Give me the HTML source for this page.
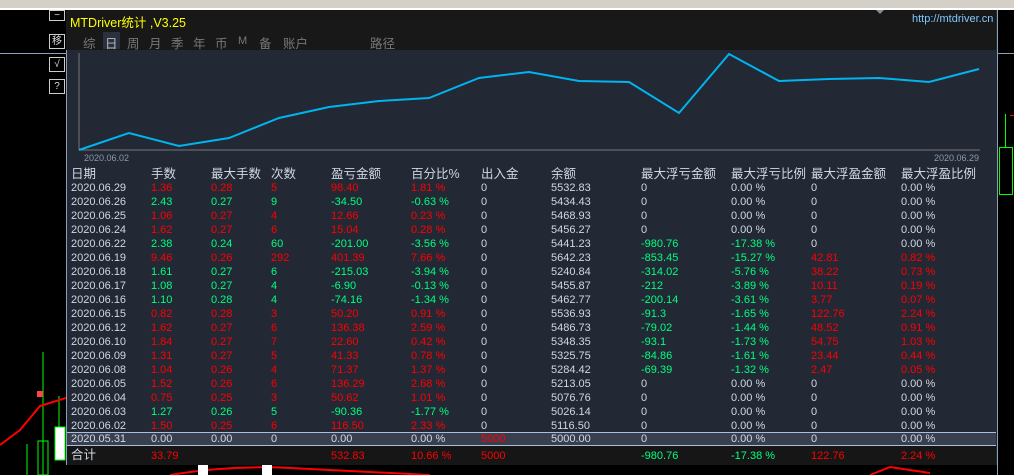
<!DOCTYPE html><html><head><meta charset="utf-8"><style>
body{margin:0;width:1014px;height:475px;background:#000;position:relative;overflow:hidden;font-family:"Liberation Sans","Noto Sans CJK SC",sans-serif}
.a{position:absolute}
#panel{left:66px;top:10px;width:930px;height:455px;background:#222834;border-left:1px solid #8aa0b8}
#hdr{left:66px;top:10px;width:930px;height:40px;background:#181818}
.btn{position:absolute;left:49px;width:14px;height:13px;border:1px solid #ccc;color:#ddd;font-size:10px;text-align:center;line-height:13px}
.r{position:absolute;left:71px;height:16px;font-size:11px;line-height:16px;color:#d0d8e4;white-space:nowrap}
.r span{display:inline-block}
.r span:nth-child(1){width:80px}.r span:nth-child(2){width:60px}.r span:nth-child(3){width:60px}.r span:nth-child(4){width:60px}.r span:nth-child(5){width:80px}.r span:nth-child(6){width:70px}.r span:nth-child(7){width:70px}.r span:nth-child(8){width:90px}.r span:nth-child(9){width:90px}.r span:nth-child(10){width:80px}.r span:nth-child(11){width:90px}
.R{color:#f00}.G{color:#00ff80}
.h{font-size:12.5px}
.tab{position:absolute;top:33px;font-size:12.5px;color:#777}
</style></head><body>
<div class="a" style="left:0;top:0;width:1014px;height:8px;background:#d4d0c8"></div>
<div class="a" style="left:0;top:8px;width:1014px;height:2px;background:#fff"></div>
<div class="a" style="left:0;top:53px;width:66px;height:1px;background:#8aa0b8"></div>
<div class="a" style="left:997px;top:53px;width:17px;height:1px;background:#8aa0b8"></div>
<div class="a" style="left:997px;top:10px;width:1px;height:465px;background:#8aa0b8"></div>
<div class="btn" style="top:10px;height:9px;line-height:9px">−</div>
<div class="btn" style="top:34px">移</div>
<div class="btn" style="top:57px">√</div>
<div class="btn" style="top:79px">?</div>
<div class="a" style="left:1010px;top:115px;width:4px;height:1px;background:#f00"></div>
<div class="a" style="left:999px;top:147px;width:12px;height:46px;border:1px solid #0f0"></div>
<div class="a" style="left:1005px;top:114px;width:1px;height:33px;background:#0f0"></div>
<!-- left chart bits -->
<svg class="a" style="left:0;top:340px" width="66" height="135"><line x1="43" y1="12" x2="43" y2="135" stroke="#0f0"/><rect x="38" y="101" width="10" height="34" fill="none" stroke="#0f0"/><rect x="55" y="87" width="10" height="33" fill="#fff" stroke="#0f0"/><line x1="27" y1="104" x2="27" y2="135" stroke="#0f0"/><line x1="59" y1="56" x2="59" y2="87" stroke="#0f0"/><path d="M0 105 L20 90 L40 66 L66 58" stroke="#f00" stroke-width="2" fill="none"/><rect x="37" y="51" width="6" height="6" fill="#f44"/></svg>
<div id="panel" class="a"></div>
<div id="hdr" class="a"></div>
<div class="a" style="left:70px;top:12px;color:#ff0;font-size:12.5px">MTDriver统计 ,V3.25</div>
<div class="a" style="left:912px;top:13px;color:#7ec8ff;font-size:11px">http://mtdriver.cn</div>
<div class="a" style="left:876px;top:10px;width:0;height:0;border-left:4px solid transparent;border-right:4px solid transparent;border-top:4px solid #889"></div>
<div class="a" style="left:103px;top:32px;width:17px;height:17px;background:#2a3040"></div>
<span class="tab" style="left:83px">综</span><span class="tab" style="left:105px;color:#bbb">日</span><span class="tab" style="left:127px">周</span><span class="tab" style="left:149px">月</span><span class="tab" style="left:171px">季</span><span class="tab" style="left:193px">年</span><span class="tab" style="left:215px">币</span><span class="tab" style="left:238px;font-size:11px;top:35px">M</span><span class="tab" style="left:259px">备</span><span class="tab" style="left:283px">账户</span><span class="tab" style="left:370px">路径</span>
<svg class="a" style="left:66px;top:50px" width="930" height="115">
<line x1="13" y1="3" x2="13" y2="100" stroke="#777"/><line x1="13" y1="100" x2="914" y2="100" stroke="#777"/>
<polyline fill="none" stroke="#00b4f0" stroke-width="2" points="13,100 63,83 113,96 163,88 213,68 263,57 313,51 363,48 413,28 463,22 513,31 563,32 613,63 663,4 713,31 763,29 813,28 863,32 913,19"/>
<text x="18" y="111" fill="#8a9ab0" font-size="9" font-family="Liberation Sans">2020.06.02</text>
<text x="868" y="111" fill="#8a9ab0" font-size="9" font-family="Liberation Sans">2020.06.29</text>
</svg>
<div class="r h" style="top:166px"><span>日期</span><span>手数</span><span>最大手数</span><span>次数</span><span>盈亏金额</span><span>百分比%</span><span>出入金</span><span>余额</span><span>最大浮亏金额</span><span>最大浮亏比例</span><span>最大浮盈金额</span><span>最大浮盈比例</span></div>
<div class="r" style="top:180px"><span>2020.06.29</span><span class="R">1.36</span><span class="R">0.28</span><span class="R">5</span><span class="R">98.40</span><span class="R">1.81 %</span><span>0</span><span>5532.83</span><span>0</span><span>0.00 %</span><span>0</span><span>0.00 %</span></div>
<div class="r" style="top:194px"><span>2020.06.26</span><span class="G">2.43</span><span class="G">0.27</span><span class="G">9</span><span class="G">-34.50</span><span class="G">-0.63 %</span><span>0</span><span>5434.43</span><span>0</span><span>0.00 %</span><span>0</span><span>0.00 %</span></div>
<div class="r" style="top:208px"><span>2020.06.25</span><span class="R">1.06</span><span class="R">0.27</span><span class="R">4</span><span class="R">12.66</span><span class="R">0.23 %</span><span>0</span><span>5468.93</span><span>0</span><span>0.00 %</span><span>0</span><span>0.00 %</span></div>
<div class="r" style="top:222px"><span>2020.06.24</span><span class="R">1.62</span><span class="R">0.27</span><span class="R">6</span><span class="R">15.04</span><span class="R">0.28 %</span><span>0</span><span>5456.27</span><span>0</span><span>0.00 %</span><span>0</span><span>0.00 %</span></div>
<div class="r" style="top:236px"><span>2020.06.22</span><span class="G">2.38</span><span class="G">0.24</span><span class="G">60</span><span class="G">-201.00</span><span class="G">-3.56 %</span><span>0</span><span>5441.23</span><span class="G">-980.76</span><span class="G">-17.38 %</span><span>0</span><span>0.00 %</span></div>
<div class="r" style="top:250px"><span>2020.06.19</span><span class="R">9.46</span><span class="R">0.26</span><span class="R">292</span><span class="R">401.39</span><span class="R">7.66 %</span><span>0</span><span>5642.23</span><span class="G">-853.45</span><span class="G">-15.27 %</span><span class="R">42.81</span><span class="R">0.82 %</span></div>
<div class="r" style="top:264px"><span>2020.06.18</span><span class="G">1.61</span><span class="G">0.27</span><span class="G">6</span><span class="G">-215.03</span><span class="G">-3.94 %</span><span>0</span><span>5240.84</span><span class="G">-314.02</span><span class="G">-5.76 %</span><span class="R">38.22</span><span class="R">0.73 %</span></div>
<div class="r" style="top:278px"><span>2020.06.17</span><span class="G">1.08</span><span class="G">0.27</span><span class="G">4</span><span class="G">-6.90</span><span class="G">-0.13 %</span><span>0</span><span>5455.87</span><span class="G">-212</span><span class="G">-3.89 %</span><span class="R">10.11</span><span class="R">0.19 %</span></div>
<div class="r" style="top:292px"><span>2020.06.16</span><span class="G">1.10</span><span class="G">0.28</span><span class="G">4</span><span class="G">-74.16</span><span class="G">-1.34 %</span><span>0</span><span>5462.77</span><span class="G">-200.14</span><span class="G">-3.61 %</span><span class="R">3.77</span><span class="R">0.07 %</span></div>
<div class="r" style="top:306px"><span>2020.06.15</span><span class="R">0.82</span><span class="R">0.28</span><span class="R">3</span><span class="R">50.20</span><span class="R">0.91 %</span><span>0</span><span>5536.93</span><span class="G">-91.3</span><span class="G">-1.65 %</span><span class="R">122.76</span><span class="R">2.24 %</span></div>
<div class="r" style="top:320px"><span>2020.06.12</span><span class="R">1.62</span><span class="R">0.27</span><span class="R">6</span><span class="R">136.38</span><span class="R">2.59 %</span><span>0</span><span>5486.73</span><span class="G">-79.02</span><span class="G">-1.44 %</span><span class="R">48.52</span><span class="R">0.91 %</span></div>
<div class="r" style="top:334px"><span>2020.06.10</span><span class="R">1.84</span><span class="R">0.27</span><span class="R">7</span><span class="R">22.60</span><span class="R">0.42 %</span><span>0</span><span>5348.35</span><span class="G">-93.1</span><span class="G">-1.73 %</span><span class="R">54.75</span><span class="R">1.03 %</span></div>
<div class="r" style="top:348px"><span>2020.06.09</span><span class="R">1.31</span><span class="R">0.27</span><span class="R">5</span><span class="R">41.33</span><span class="R">0.78 %</span><span>0</span><span>5325.75</span><span class="G">-84.86</span><span class="G">-1.61 %</span><span class="R">23.44</span><span class="R">0.44 %</span></div>
<div class="r" style="top:362px"><span>2020.06.08</span><span class="R">1.04</span><span class="R">0.26</span><span class="R">4</span><span class="R">71.37</span><span class="R">1.37 %</span><span>0</span><span>5284.42</span><span class="G">-69.39</span><span class="G">-1.32 %</span><span class="R">2.47</span><span class="R">0.05 %</span></div>
<div class="r" style="top:376px"><span>2020.06.05</span><span class="R">1.52</span><span class="R">0.26</span><span class="R">6</span><span class="R">136.29</span><span class="R">2.68 %</span><span>0</span><span>5213.05</span><span>0</span><span>0.00 %</span><span>0</span><span>0.00 %</span></div>
<div class="r" style="top:390px"><span>2020.06.04</span><span class="R">0.75</span><span class="R">0.25</span><span class="R">3</span><span class="R">50.62</span><span class="R">1.01 %</span><span>0</span><span>5076.76</span><span>0</span><span>0.00 %</span><span>0</span><span>0.00 %</span></div>
<div class="r" style="top:404px"><span>2020.06.03</span><span class="G">1.27</span><span class="G">0.26</span><span class="G">5</span><span class="G">-90.36</span><span class="G">-1.77 %</span><span>0</span><span>5026.14</span><span>0</span><span>0.00 %</span><span>0</span><span>0.00 %</span></div>
<div class="r" style="top:418px"><span>2020.06.02</span><span class="R">1.50</span><span class="R">0.25</span><span class="R">6</span><span class="R">116.50</span><span class="R">2.33 %</span><span>0</span><span>5116.50</span><span>0</span><span>0.00 %</span><span>0</span><span>0.00 %</span></div>
<div class="a" style="left:67px;top:432px;width:929px;height:12px;background:#3a3f50;border-top:1px solid #a8c0d8;border-bottom:1px solid #a8c0d8"></div>
<div class="r" style="top:431px"><span>2020.05.31</span><span>0.00</span><span>0.00</span><span>0</span><span>0.00</span><span>0.00 %</span><span class="R">5000</span><span>5000.00</span><span>0</span><span>0.00 %</span><span>0</span><span>0.00 %</span></div>
<div class="a" style="left:67px;top:446px;width:929px;height:19px;background:#161616"></div>
<div class="r" style="top:447px"><span class="h">合计</span><span class="R">33.79</span><span></span><span></span><span class="R">532.83</span><span class="R">10.66 %</span><span class="R">5000</span><span></span><span class="G">-980.76</span><span class="G">-17.38 %</span><span class="R">122.76</span><span class="R">2.24 %</span></div>
<svg class="a" style="left:170px;top:465px" width="830" height="10"><path d="M0 10 Q60 0 120 3 T260 10" stroke="#f00" stroke-width="2" fill="none"/><rect x="28" y="0" width="10" height="10" fill="#fff"/><rect x="92" y="0" width="10" height="10" fill="#fff"/><path d="M700 10 L720 2 L760 8" stroke="#f00" stroke-width="2" fill="none"/></svg>
</body></html>
